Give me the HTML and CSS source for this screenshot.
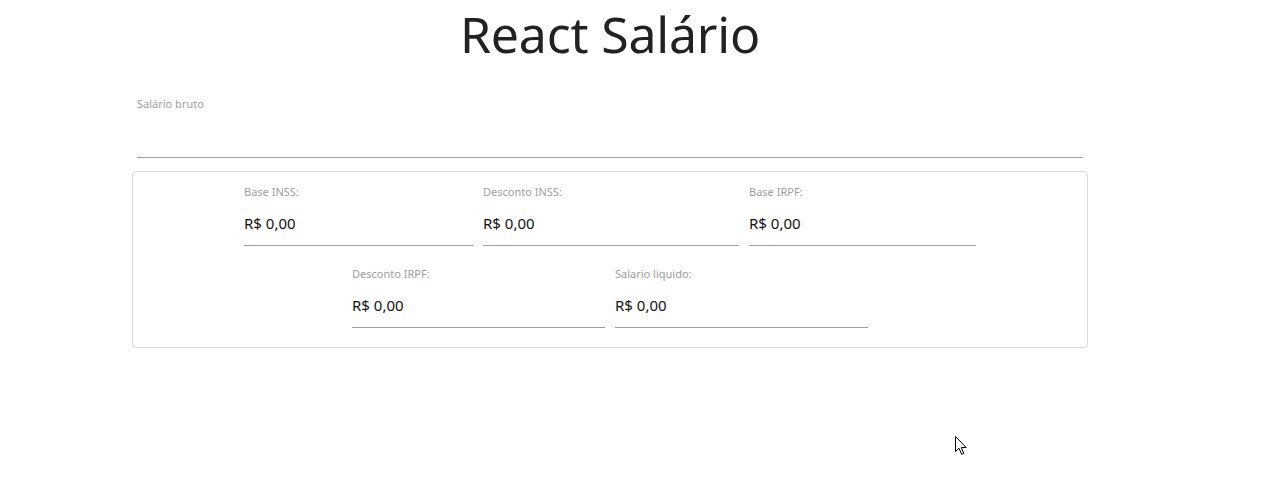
FILE: index.html
```html
<!DOCTYPE html>
<html lang="pt-BR">
<head>
<meta charset="utf-8">
<title>React Salário</title>
<link rel="stylesheet" href="styles.css">
</head>
<body>
<div class="container">
  <h1 class="title">React Salário</h1>
  <div class="input-field">
    <label class="field-label">Salário bruto</label>
    <div class="input-line"></div>
  </div>
  <div class="card">
    <div class="row">
      <div class="field w229">
        <span class="field-label">Base INSS:</span>
        <span class="value">R$ 0,00</span>
      </div>
      <div class="field w256">
        <span class="field-label">Desconto INSS:</span>
        <span class="value">R$ 0,00</span>
      </div>
      <div class="field w227">
        <span class="field-label">Base IRPF:</span>
        <span class="value">R$ 0,00</span>
      </div>
    </div>
    <div class="row row2">
      <div class="field w253">
        <span class="field-label">Desconto IRPF:</span>
        <span class="value">R$ 0,00</span>
      </div>
      <div class="field w253">
        <span class="field-label">Salario liquido:</span>
        <span class="value">R$ 0,00</span>
      </div>
    </div>
  </div>
</div>
<svg class="cursor" width="13" height="20" viewBox="0 0 13 20">
  <path d="M0.5 0.5 L0.5 15.5 L4 12.2 L6.6 18.3 L8.8 17.4 L6.3 11.5 L11.2 11.5 Z" fill="#fff" stroke="#000" stroke-width="1" stroke-linejoin="miter"/>
</svg>
</body>
</html>
```

FILE: styles.css
```css
html, body {
  margin: 0;
  padding: 0;
  background: #fff;
}
body {
  font-family: "Noto Sans", "Open Sans", "Liberation Sans", sans-serif;
  color: rgba(0, 0, 0, 0.87);
  position: relative;
  min-height: 478px;
}
.container {
  width: 956px;
  margin-left: 132px;
}
.title {
  margin: 0;
  font-weight: 400;
  font-size: 50px;
  line-height: 69px;
  text-align: center;
  color: #222;
  letter-spacing: -0.2px;
}
.input-field {
  padding: 27px 5px 0 5px;
}
.field-label {
  display: block;
  font-size: 11px;
  line-height: 16px;
  color: #9e9e9e;
}
.input-line {
  height: 45px;
  border-bottom: 1px solid #9e9e9e;
}
.card {
  margin-top: 13px;
  border: 1px solid #d9d9d9;
  border-radius: 4px;
  padding: 12px 0 19px 0;
}
.row {
  display: flex;
  justify-content: center;
  gap: 10px;
}
.row2 {
  margin-top: 20px;
}
.field {
  display: flex;
  flex-direction: column;
  border-bottom: 1px solid #9e9e9e;
  padding-bottom: 12px;
}
.field .value {
  margin-top: 13px;
  font-size: 15px;
  line-height: 20px;
  color: #111;
}
.w229 { width: 229px; }
.w256 { width: 256px; }
.w227 { width: 227px; }
.w253 { width: 253px; }
.cursor {
  position: absolute;
  left: 955px;
  top: 436px;
}
```
